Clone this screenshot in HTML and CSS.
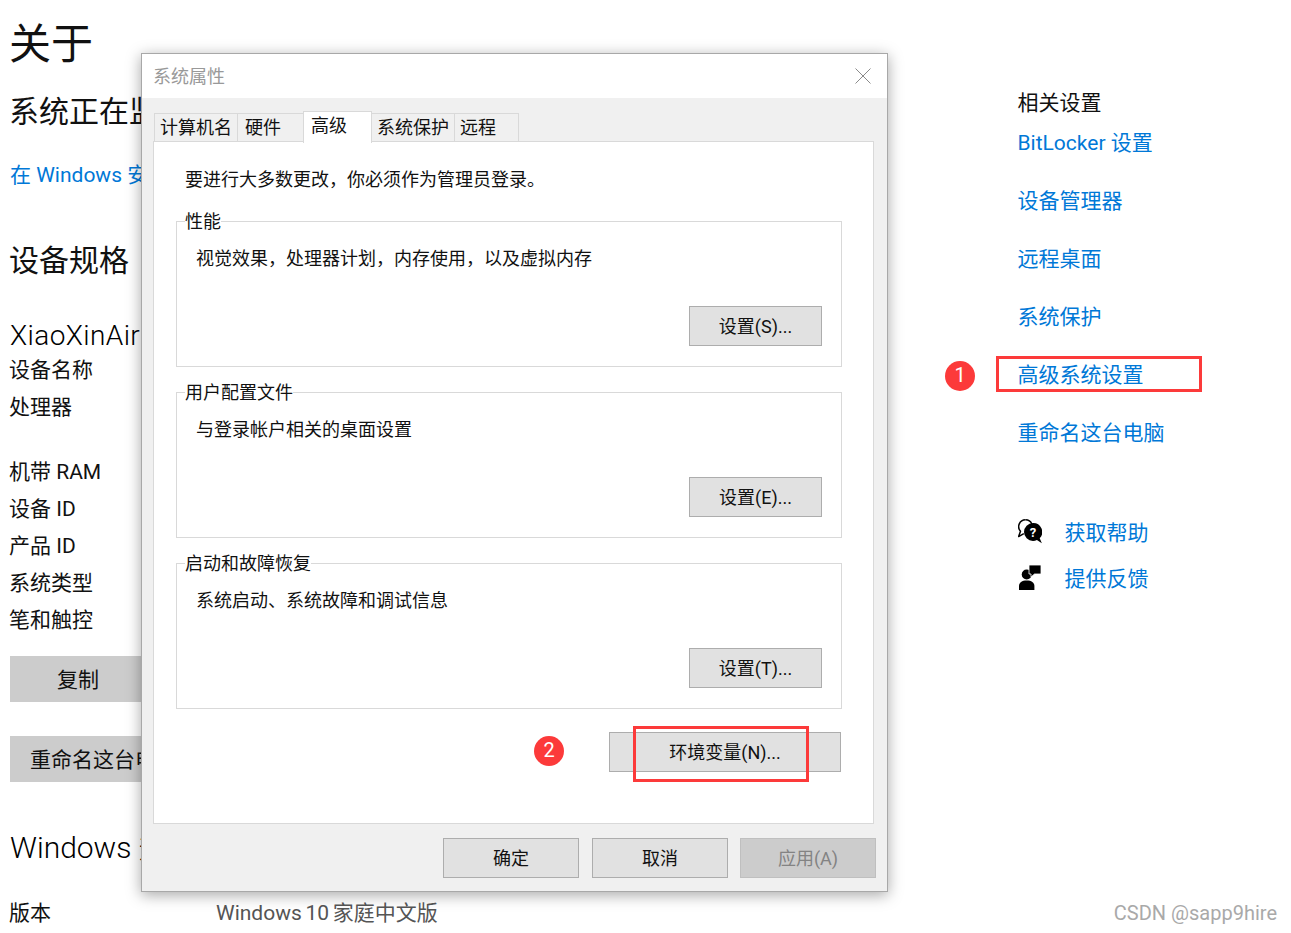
FILE: index.html
```html
<!DOCTYPE html>
<html lang="zh-CN">
<head>
    <meta charset="UTF-8">
    <title>关于</title>
    <link rel="stylesheet" href="styles.css">
</head>
<body>
    <div class="page">
        <div class="left-col">
            <h1 class="page-title">关于</h1>
            <h2 class="sub-title status-title">系统正在监</h2>
            <a class="link security-link">在 Windows 安</a>
            <h2 class="sub-title spec-title">设备规格</h2>
            <div class="device-name">XiaoXinAir</div>
            <div class="spec-row spec-row-first">设备名称</div>
            <div class="spec-row spec-row-tall">处理器</div>
            <div class="spec-row">机带 RAM</div>
            <div class="spec-row">设备 ID</div>
            <div class="spec-row">产品 ID</div>
            <div class="spec-row">系统类型</div>
            <div class="spec-row">笔和触控</div>
            <div class="gray-btn copy-btn">复制</div>
            <div class="gray-btn rename-btn">重命名这台电脑</div>
            <h2 class="sub-title win-title">Windows 规格</h2>
            <div class="version-row"><span class="version-label">版本</span><span class="version-value">Windows 10 家庭中文版</span></div>
        </div>
        <div class="right-col">
            <div class="related-title">相关设置</div>
            <a class="link related-link">BitLocker 设置</a>
            <a class="link related-link">设备管理器</a>
            <a class="link related-link">远程桌面</a>
            <a class="link related-link">系统保护</a>
            <a class="link related-link">高级系统设置</a>
            <a class="link related-link">重命名这台电脑</a>
            <div class="help-list">
                <div class="help-row">
                    <svg class="help-icon" viewBox="0 0 24 25">
                        <path d="M7.500.8a6.800 6.800 0 0 0-5 11.400L.6 17.600l5.200-3" fill="#fff" stroke="#000" stroke-width="1.500" stroke-linejoin="round"/>
                        <path d="M7.500.8a6.800 6.800 0 0 1 6.300 4.200" fill="none" stroke="#000" stroke-width="1.500"/>
                        <path d="M15 4a9 9 0 1 0 0 18c1.400 0 2.700-.3 3.900-.9l5 3.200-2.200-5.100A9 9 0 0 0 15 4z"/>
                        <text class="help-mark" x="15" y="17.500" text-anchor="middle">?</text>
                    </svg>
                    <a class="link">获取帮助</a>
                </div>
                <div class="help-row">
                    <svg class="help-icon" viewBox="0 0 24 25">
                        <circle cx="8.700" cy="9.500" r="5"/>
                        <path d="M1 25v-4c0-3.500 3-5.500 7.700-5.500s7.700 2 7.700 5.500v4z"/>
                        <path d="M11 0h12v9h-6.500L13 12V9h-2z" stroke="#fff" stroke-width=".8"/>
                    </svg>
                    <a class="link">提供反馈</a>
                </div>
            </div>
        </div>
    </div>
    <div class="watermark">CSDN @sapp9hire</div>

    <div class="dialog">
        <div class="dialog-title">
            <span>系统属性</span>
            <svg class="close-icon" viewBox="0 0 16 16"><path d="M.5.500l15 15M15.500.500l-15 15" stroke="#8a8a8a" stroke-width="1" fill="none"/></svg>
        </div>
        <div class="dialog-body">
            <div class="tabs">
                <div class="tab">计算机名</div>
                <div class="tab tab-hw">硬件</div>
                <div class="tab tab-active">高级</div>
                <div class="tab">系统保护</div>
                <div class="tab tab-remote">远程</div>
            </div>
            <div class="panel">
                <p class="intro">要进行大多数更改，你必须作为管理员登录。</p>
                <div class="group">
                    <div class="group-title">性能</div>
                    <div class="group-desc">视觉效果，处理器计划，内存使用，以及虚拟内存</div>
                    <div class="win-btn group-btn">设置(S)...</div>
                </div>
                <div class="group">
                    <div class="group-title">用户配置文件</div>
                    <div class="group-desc">与登录帐户相关的桌面设置</div>
                    <div class="win-btn group-btn">设置(E)...</div>
                </div>
                <div class="group">
                    <div class="group-title">启动和故障恢复</div>
                    <div class="group-desc">系统启动、系统故障和调试信息</div>
                    <div class="win-btn group-btn">设置(T)...</div>
                </div>
                <div class="win-btn env-btn">环境变量(N)...</div>
            </div>
            <div class="dialog-actions">
                <div class="win-btn action-btn">确定</div>
                <div class="win-btn action-btn">取消</div>
                <div class="win-btn action-btn action-disabled">应用(A)</div>
            </div>
        </div>
    </div>

    <div class="badge badge-one">1</div>
    <div class="badge badge-two">2</div>
    <div class="red-box red-box-one"></div>
    <div class="red-box red-box-two"></div>
</body>
</html>
```

FILE: styles.css
```css
html, body {
    margin: 0;
    height: 933px;
    overflow: hidden;
}
body {
    position: relative;
    background: #fff;
    color: #111;
    font-family: "Roboto", "Noto Sans CJK SC", sans-serif;
}
.page {
    display: flex;
}
.left-col {
    width: 999px;
    padding: 17px 0 0 9px;
    flex-shrink: 0;
    white-space: nowrap;
}
.page-title {
    margin: 0;
    font-size: 42px;
    font-weight: 400;
    line-height: 56px;
}
.sub-title {
    margin: 0;
    font-size: 30px;
    font-weight: 400;
    line-height: 40px;
}
.status-title { margin-top: 19px; }
.spec-title { margin-top: 51px; }
.win-title {
    margin: 46px 0 0 1px;
    color: #000;
    font-weight: 300;
}
.link {
    display: block;
    color: #0078d7;
    font-size: 21px;
    line-height: 30px;
}
.security-link { margin: 28px 0 0 1px; }
.device-name {
    margin: 37px 0 0 1px;
    color: #000;
    font-size: 28px;
    font-weight: 300;
    letter-spacing: 0.4px;
    line-height: 36px;
}
.spec-row {
    height: 37px;
    font-size: 21px;
    line-height: 37px;
}
.spec-row-first { margin-top: -2px; }
.spec-row-tall { height: 65px; }
.gray-btn {
    height: 46px;
    margin-left: 1px;
    background: #ccc;
    font-size: 21px;
    line-height: 48px;
}
.copy-btn {
    width: 136px;
    margin-top: 17px;
    text-align: center;
}
.rename-btn {
    width: 168px;
    margin-top: 34px;
    padding-left: 20px;
}
.version-row {
    display: flex;
    margin-top: 29px;
    font-size: 21px;
    line-height: 32px;
}
.version-label { width: 207px; }
.version-value {
    color: #555;
    word-spacing: -1.5px;
}

.right-col {
    width: 260px;
    padding-left: 9.5px;
}
.related-title {
    margin-top: 88px;
    font-size: 21px;
    line-height: 30px;
}
.related-link {
    margin-top: 28px;
}
.related-title + .related-link { margin-top: 10px; }
.help-list {
    margin-top: 70px;
    display: flex;
    flex-direction: column;
    gap: 16px;
}
.help-row {
    display: flex;
    align-items: center;
    gap: 23px;
}
.help-icon {
    width: 24px;
    height: 25px;
    margin-top: -3px;
}
.help-mark {
    fill: #fff;
    font-size: 13px;
    font-weight: 700;
}
.watermark {
    position: absolute;
    right: 14px;
    bottom: 8px;
    color: #a9a9a9;
    font-size: 20px;
}

.dialog {
    position: absolute;
    left: 141px;
    top: 53px;
    width: 745px;
    height: 837px;
    border: 1px solid #a8a8a8;
    box-shadow: 0 3px 14px rgba(0, 0, 0, 0.35);
    display: flex;
    flex-direction: column;
    font-size: 18px;
}
.dialog-title {
    height: 42px;
    flex-shrink: 0;
    background: #fff;
    padding: 0 16px 2px 11px;
    display: flex;
    align-items: center;
    justify-content: space-between;
    color: #999;
}
.close-icon {
    width: 16px;
    height: 16px;
    margin-top: 2px;
}
.dialog-body {
    flex: 1;
    background: #f0f0f0;
    padding: 13px 13px 0 11px;
    display: flex;
    flex-direction: column;
}
.tabs {
    display: flex;
    height: 31px;
    padding-left: 1px;
    align-items: flex-end;
    position: relative;
    z-index: 1;
    margin-bottom: -1px;
}
.tab {
    height: 29px;
    box-sizing: border-box;
    padding: 0 5px;
    border: 1px solid #d9d9d9;
    border-left-width: 0;
    background: #f0f0f0;
    line-height: 28px;
    white-space: nowrap;
}
.tab:first-child { border-left-width: 1px; }
.tab-hw { width: 66px; padding-left: 7px; }
.tab-remote { width: 64px; }
.tab-active {
    width: 69px;
    height: 32px;
    margin-bottom: -1px;
    padding: 0 7px;
    background: #fff;
    border-bottom: 0;
    border-left-width: 1px;
    margin-left: -1px;
    line-height: 27px;
}
.panel {
    height: 681px;
    background: #fff;
    border: 1px solid #d9d9d9;
    padding: 0 31px 0 22px;
    display: flex;
    flex-direction: column;
}
.intro {
    margin: 24px 0 28px 9px;
    line-height: 27px;
}
.group {
    height: 146px;
    box-sizing: border-box;
    border: 1px solid #d9d9d9;
    padding: 0 19px 20px 19px;
    display: flex;
    flex-direction: column;
}
.group + .group { margin-top: 25px; }
.group-title {
    width: fit-content;
    margin: -12px 0 0 -11px;
    line-height: 24px;
    background: #fff;
}
.group-desc {
    margin-top: 11px;
    line-height: 27px;
}
.win-btn {
    box-sizing: border-box;
    height: 40px;
    background: #e1e1e1;
    border: 1px solid #adadad;
    line-height: 40px;
    text-align: center;
    white-space: nowrap;
}
.group-btn {
    width: 133px;
    margin: auto 0 0 auto;
}
.env-btn {
    width: 232px;
    margin: 23px 1px 0 auto;
}
.dialog-actions {
    display: flex;
    justify-content: flex-end;
    gap: 13px;
    margin: 14px -2px 0 0;
}
.action-btn { width: 136px; }
.action-disabled {
    margin-left: -1px;
    background: #ccc;
    border-color: #bfbfbf;
    color: #838383;
}

.badge {
    position: absolute;
    width: 30px;
    height: 30px;
    border-radius: 50%;
    background: #fc3a3a;
    color: #fff;
    font-size: 20px;
    line-height: 28px;
    text-align: center;
}
.badge-one { left: 945px; top: 361px; }
.badge-two { left: 534px; top: 736px; }
.red-box {
    position: absolute;
    box-sizing: border-box;
    border: 3px solid #fc3a3a;
}
.red-box-one { left: 996px; top: 356px; width: 206px; height: 36px; }
.red-box-two { left: 633px; top: 726px; width: 176px; height: 56px; }
```
